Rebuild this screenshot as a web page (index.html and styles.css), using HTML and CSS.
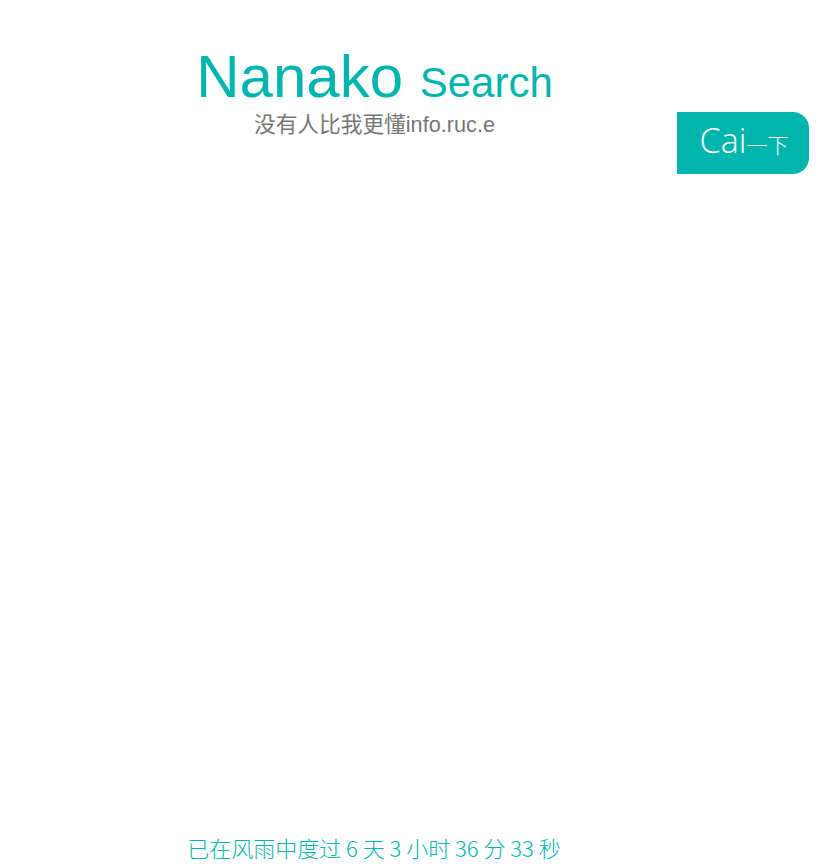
FILE: index.html
```html
<!DOCTYPE html>
<html lang="zh-CN">
<head>
<meta charset="utf-8">
<title>Nanako Search</title>
<link rel="stylesheet" href="styles.css">
</head>
<body>
<div class="page">
  <div class="top">
    <div class="brand">
      <h1 class="title">Nanako <span class="title-sub">Search</span></h1>
      <p class="slogan">没有人比我更懂info.ruc.e</p>
    </div>
    <form class="search">
      <button type="button" class="search-btn"><span class="btn-latin">Cai</span><span class="btn-cjk">一下</span></button>
    </form>
  </div>
  <footer class="footer">已在风雨中度过 6 天 3 小时 36 分 33 秒</footer>
</div>
</body>
</html>
```
FILE: styles.css
```css
html, body {
  margin: 0;
  padding: 0;
  background: #ffffff;
}
.page {
  display: flex;
  flex-direction: column;
  min-height: 868px;
  height: 868px;
  box-sizing: border-box;
  padding: 0 9px 0 8px;
}
.top {
  display: flex;
  align-items: flex-start;
}
.brand {
  flex: 1;
  text-align: center;
  padding-left: 64px;
  padding-top: 47px;
}
.title {
  margin: 0;
  font-family: "Liberation Sans", Arial, sans-serif;
  font-weight: normal;
  font-size: 60px;
  line-height: 1;
  color: #00b5ad;
  white-space: nowrap;
}
.title-sub {
  font-size: 42px;
}
.slogan {
  margin: 3px 0 0;
  font-family: "Liberation Sans", "Noto Sans CJK SC", sans-serif;
  font-size: 21.7px;
  line-height: 30px;
  color: #767676;
}
.search {
  margin: 112px 0 0;
  display: flex;
}
.search-btn {
  width: 132px;
  height: 62px;
  border: none;
  border-radius: 0 16px 16px 0;
  background: #00b5ad;
  color: #ffffff;
  display: flex;
  align-items: baseline;
  justify-content: center;
  padding: 5px 0 0 2px;
  cursor: pointer;
}
.btn-latin {
  font-family: "Open Sans", "Noto Sans", sans-serif;
  font-weight: 300;
  font-size: 34px;
}
.btn-cjk {
  font-family: "Noto Sans CJK SC", sans-serif;
  font-weight: 300;
  font-size: 21px;
}
.footer {
  margin-top: auto;
  padding: 0 69px 6px 0;
  text-align: center;
  font-family: "Noto Sans CJK SC", sans-serif;
  font-weight: 300;
  font-size: 22px;
  line-height: 30px;
  color: #00b5ad;
}
```
